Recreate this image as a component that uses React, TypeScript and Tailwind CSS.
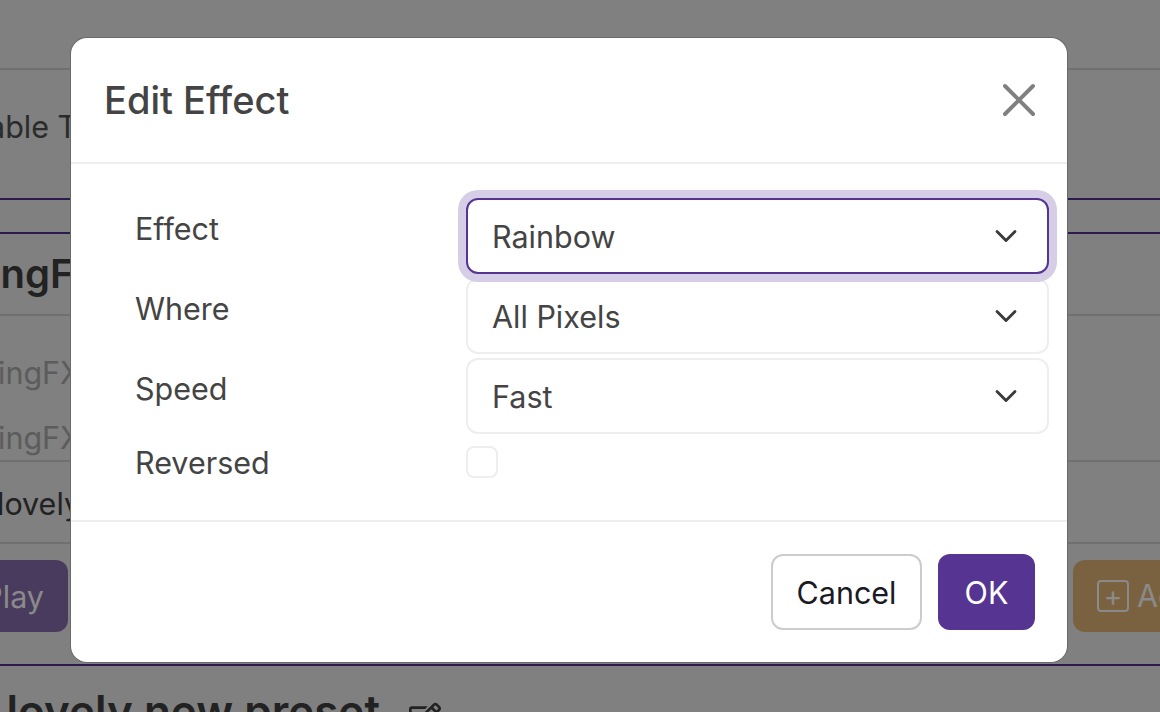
import { ChevronDown, X } from "lucide-react";
import { FaRegEdit } from "react-icons/fa";

function Row({ label, value, focused }: { label: string; value: string; focused?: boolean }) {
  return (
    <div className="flex h-[80px]">
      <div className="w-[363px] pl-[32px] pt-[8px] text-[30.5px] leading-[46px] text-[#444444]">{label}</div>
      <div
        className={
          "flex h-[76px] w-[583px] items-center justify-between rounded-[12px] border-2 pl-[24px] pr-[23px] text-[30.5px] text-[#444444] " +
          (focused ? "relative border-[#563592] bg-white shadow-[0_0_0_8px_#d5cee6]" : "border-[#eeeeee] bg-white")
        }
      >
        <span className="pt-[2px]">{value}</span>
        <ChevronDown className="h-[36px] w-[36px] text-[#3a3a3a]" strokeWidth={1.9} />
      </div>
    </div>
  );
}

export default function App() {
  return (
    <div className="relative h-[712px] w-[1160px] overflow-hidden bg-[#808080] font-['Inter',sans-serif] text-[#222222]">
      {/* page behind the dialog */}
      <div className="flex flex-col">
        <div className="h-[70px] border-b-2 border-[#707070]" />
        <div className="flex h-[128px] items-center text-[30.5px] text-[#2b2b2b]">
          <span className="ml-[-12px] pb-[14px]">able T</span>
        </div>
        <div className="h-[2px] bg-[#2e1a50]" />
        <div className="h-[32px]" />
        <div className="h-[2px] bg-[#2e1a50]" />
        <div className="flex h-[82px] items-center border-b-2 border-[#707070] text-[40px] font-semibold text-[#222222]">
          <span className="ml-[-10px]">ingF</span>
        </div>
        <div className="flex h-[146px] flex-col border-b-2 border-[#707070] text-[30.5px] text-[#5c5c5c]">
          <span className="ml-[-2px] mt-[34px]">ingFX</span>
          <span className="ml-[-2px] mt-[19px]">ingFX</span>
        </div>
        <div className="flex h-[82px] items-center border-b-2 border-[#707070] text-[30.5px] text-[#222222]">
          <span className="ml-[-3px] pt-[4px]">lovely</span>
        </div>
        <div className="flex h-[120px] items-start justify-between pt-[16px]">
          <div className="ml-[-40px] flex h-[72px] w-[108px] items-center justify-end rounded-[12px] bg-[#493b5d] pr-[24px] pt-[2px] text-[30.5px] text-[#8a8a8a]">
            Play
          </div>
          <div className="mr-[-40px] flex h-[72px] w-[127px] items-center gap-[8px] rounded-[12px] bg-[#7a6240] pl-[24px] text-[30.5px] text-[#8a8a8a]">
            <span className="flex h-[32px] w-[32px] shrink-0 items-center justify-center rounded-[4px] border-2 border-[#8a8a8a] text-[28px] leading-none">
              +
            </span>
            <span>Add</span>
          </div>
        </div>
        <div className="h-[2px] bg-[#2e1a50]" />
        <div className="flex items-start pt-[15px] text-[44px] font-semibold leading-[60px] text-[#222222]">
          <span className="ml-[-22px] whitespace-nowrap">r lovely new preset</span>
          <FaRegEdit className="ml-[29px] mt-[20px] h-[32px] w-[32px] shrink-0" />
        </div>
      </div>

      {/* dialog */}
      <div className="absolute left-[71px] top-[38px] w-[996px] rounded-[16px] bg-white shadow-[0_0_0_1px_#6a6a6a]">
        <div className="flex h-[126px] items-center justify-between border-b-2 border-[#eeeeee] pl-[33px] pr-[20px]">
          <div className="text-[38px] font-medium text-[#444444]">Edit Effect</div>
          <X className="h-[56px] w-[56px] text-[#808080]" strokeWidth={1.7} />
        </div>
        <div className="flex h-[358px] flex-col border-b-2 border-[#eeeeee] pl-[32px] pt-[34px]">
          <Row label="Effect" value="Rainbow" focused />
          <Row label="Where" value="All Pixels" />
          <Row label="Speed" value="Fast" />
          <div className="mt-[2px] flex">
            <div className="w-[363px] pl-[32px] text-[30.5px] leading-[46px] text-[#444444]">Reversed</div>
            <div className="mt-[6px] h-[32px] w-[32px] rounded-[8px] border-2 border-[#eeeeee]" />
          </div>
        </div>
        <div className="flex h-[140px] items-start justify-end gap-[16px] pr-[32px] pt-[32px]">
          <button className="h-[76px] w-[151px] rounded-[12px] border-2 border-[#cccccc] bg-white pt-[2px] text-[30.5px] text-[#1a1a24]">
            Cancel
          </button>
          <button className="h-[76px] w-[97px] rounded-[12px] bg-[#563592] pt-[2px] text-[30.5px] text-white">OK</button>
        </div>
      </div>
    </div>
  );
}
